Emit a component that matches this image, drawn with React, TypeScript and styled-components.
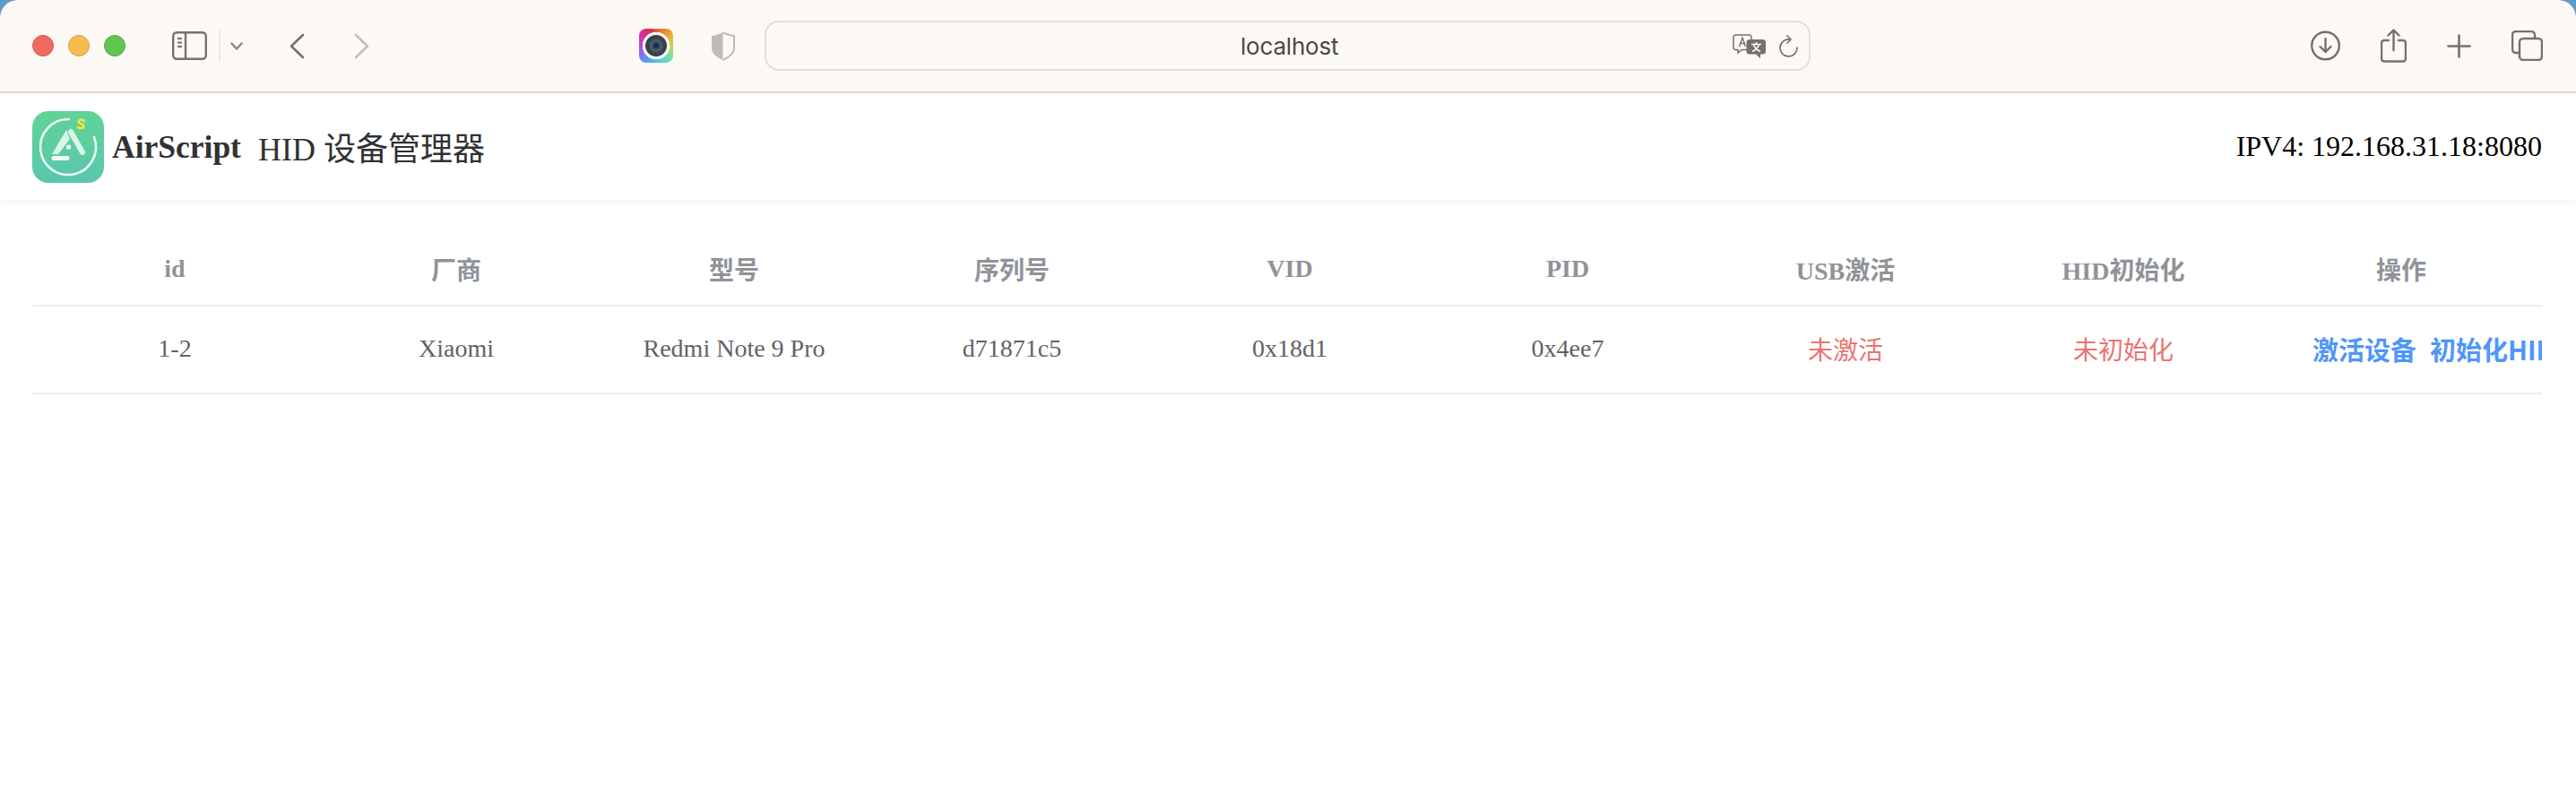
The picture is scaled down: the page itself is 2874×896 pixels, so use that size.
import React from 'react';
import styled, { createGlobalStyle } from 'styled-components';

const GlobalStyle = createGlobalStyle`
  html, body {
    margin: 0;
    padding: 0;
    background: #fff;
  }
  body {
    font-family: "Liberation Serif", "Noto Sans CJK SC", serif;
  }
`;

const Page = styled.div`
  width: 2874px;
  height: 896px;
  overflow: hidden;
  background: #fff;
`;

const CornerBackdrop = styled.div`
  background: #5a9cc8;
`;

const Toolbar = styled.div`
  height: 102px;
  background: #fcf9f5;
  border-bottom: 2px solid #dddcda;
  display: flex;
  align-items: center;
  padding: 0 37px 0 36px;
  color: #74716c;
  border-radius: 20px 20px 0 0;
`;

const Lights = styled.div`
  display: flex;
  gap: 16px;
  margin-right: 52px;
`;

const Light = styled.span<{ $color: string; $edge: string }>`
  width: 24px;
  height: 24px;
  border-radius: 50%;
  box-sizing: border-box;
  background: ${(p) => p.$color};
  border: 1px solid ${(p) => p.$edge};
`;

const Divider = styled.span`
  width: 2px;
  height: 36px;
  background: #ece9e5;
  margin: 0 11px 0 13px;
`;

const NavIcon = styled.svg<{ $left?: number }>`
  display: block;
  flex: none;
  margin-left: ${(p) => p.$left ?? 0}px;
`;

const Camera = styled.span`
  flex: none;
  width: 38px;
  height: 38px;
  margin-left: 301px;
  border-radius: 8px;
  background:
    radial-gradient(circle at 50% 50%, #1e3346 0 3px, #46596b 4px 7px, #3b4149 8px 11.5px, #fff 12.5px 15px, transparent 15.5px),
    conic-gradient(#e0603a, #e8b838 60deg, #b8dc60 100deg, #68dcc0 140deg, #4ea6f5 210deg, #9a5cf0 250deg, #d82fb0 300deg, #d8304f 340deg, #e0603a);
`;

const UrlBar = styled.div`
  width: 1167px;
  height: 56px;
  margin-left: 33px;
  border: 2px solid #e2dfda;
  border-radius: 16px;
  box-sizing: border-box;
  display: flex;
  align-items: center;
  justify-content: flex-end;
  position: relative;
  padding-right: 12px;
  gap: 15px;
  flex: none;
`;

const UrlText = styled.span`
  position: absolute;
  left: 529px;
  font-family: "Inter", "Liberation Sans", sans-serif;
  font-size: 26px;
  color: #4a4845;
  letter-spacing: -0.2px;
`;

const RightIcons = styled.div`
  margin-left: auto;
  display: flex;
  align-items: center;
  gap: 45px;
`;

const Header = styled.header`
  height: 119px;
  display: flex;
  align-items: center;
  justify-content: space-between;
  padding: 0 38px 0 36px;
  background: #fff;
  box-shadow: 0 2px 8px rgba(0, 0, 0, 0.06);
  position: relative;
`;

const Brand = styled.div`
  display: flex;
  align-items: center;
`;

const BrandName = styled.b`
  font-size: 35.5px;
  color: #303133;
  margin-left: 9px;
`;

const Title = styled.span`
  font-size: 36px;
  color: #303133;
  margin-left: 19px;
  padding-bottom: 2px;
`;

const Address = styled.span`
  font-size: 32px;
  color: #000;
`;

const TableWrap = styled.div`
  margin: 0 38px 0 36px;
  overflow: hidden;
`;

const Row = styled.div<{ $height: number; $top?: number }>`
  display: grid;
  grid-template-columns: 318px repeat(8, 310px);
  height: ${(p) => p.$height}px;
  padding-top: ${(p) => p.$top ?? 0}px;
  align-items: center;
  border-bottom: 2px solid #ebeef5;
  box-sizing: border-box;
`;

const HeadCell = styled.div`
  text-align: center;
  font-size: 28px;
  font-weight: bold;
  color: #909399;
`;

const Cell = styled.div<{ $tone?: 'bad' }>`
  text-align: center;
  font-size: 28px;
  padding-bottom: 2px;
  color: ${(p) => (p.$tone === 'bad' ? '#ec7272' : '#606266')};
`;

const ActionCell = styled.div`
  display: flex;
  gap: 15px;
  padding-left: 56px;
  padding-bottom: 2px;
  white-space: nowrap;
`;

const LinkButton = styled.span`
  font-family: "Noto Sans CJK SC", sans-serif;
  font-size: 29px;
  font-weight: 700;
  color: #4f96f8;
`;

const heads = ['id', '厂商', '型号', '序列号', 'VID', 'PID', 'USB激活', 'HID初始化', '操作'];
const cells = ['1-2', 'Xiaomi', 'Redmi Note 9 Pro', 'd71871c5', '0x18d1', '0x4ee7'];

const Logo = () => (
  <svg width="80" height="80" viewBox="0 0 80 80">
    <defs>
      <linearGradient id="logoBg" x1="0" y1="0" x2="0" y2="1">
        <stop offset="0" stopColor="#60d396" />
        <stop offset="1" stopColor="#5bc6ad" />
      </linearGradient>
    </defs>
    <rect width="80" height="80" rx="18" fill="url(#logoBg)" />
    <path d="M41 9 A31 31 0 1 0 69 29" fill="none" stroke="#e9fbf3" strokeWidth="2.600" strokeLinecap="round" />
    <path d="M58 11 q-4-3-6 0 q-1 2 2 3 q4 1 3 4 q-2 2-6 0" fill="none" stroke="#f2e936" strokeWidth="2.600" strokeLinecap="round" />
    <path d="M38 21 L22 48 H29 L42 31 Z" fill="#d8f7ea" />
    <path d="M43 23 L56 46" fill="none" stroke="#d8f7ea" strokeWidth="6" strokeLinecap="round" />
    <path d="M24 52.500 H39" fill="none" stroke="#eefcf6" strokeWidth="5" strokeLinecap="round" />
    <circle cx="40.500" cy="40" r="2.600" fill="#fff" />
  </svg>
);

export default function App() {
  return (
    <Page>
      <GlobalStyle />
      <CornerBackdrop>
        <Toolbar>
          <Lights>
            <Light $color="#ee6a5f" $edge="#d9564c" />
            <Light $color="#f5bd4f" $edge="#d9a23c" />
            <Light $color="#61c554" $edge="#4fae44" />
          </Lights>

          <NavIcon width="39" height="32" viewBox="0 0 39 32" fill="none" stroke="currentColor">
            <rect x="1.200" y="1.200" width="36.600" height="29.600" rx="4" strokeWidth="2.400" />
            <path d="M15 1.500V30.500" strokeWidth="2.400" />
            <path d="M6 8h5M6 12.500h5M6 17h5" strokeWidth="2" />
          </NavIcon>
          <Divider />
          <NavIcon width="14" height="9" viewBox="0 0 14 9" fill="none" stroke="#8b8883" strokeWidth="2.400" strokeLinecap="round" strokeLinejoin="round">
            <path d="M1.500 1.500L7 7.500L12.500 1.500" />
          </NavIcon>
          <NavIcon $left={52} width="17" height="29" viewBox="0 0 17 29" fill="none" stroke="currentColor" strokeWidth="2.600" strokeLinecap="round" strokeLinejoin="round">
            <path d="M15 2L2 14.500L15 27" />
          </NavIcon>
          <NavIcon $left={55} width="17" height="29" viewBox="0 0 17 29" fill="none" stroke="#c2bfba" strokeWidth="2.600" strokeLinecap="round" strokeLinejoin="round">
            <path d="M2 2L15 14.500L2 27" />
          </NavIcon>

          <Camera />
          <NavIcon $left={42} width="27" height="33" viewBox="0 0 27 33">
            <path d="M13.500 1 C10 3 5 4.500 1 5 V19 C1 25 7 29 13.500 32 Z" fill="#bfbbb5" />
            <path d="M13.500 1.500 C17 3 22 4.500 26 5 V19 C26 25 20 29 13.500 32" fill="none" stroke="#bfbbb5" strokeWidth="2" strokeLinejoin="round" />
          </NavIcon>

          <UrlBar>
            <UrlText>localhost</UrlText>
            <NavIcon width="37" height="27" viewBox="0 0 37 27">
              <path d="M3.500 1H18.500a2.500 2.500 0 0 1 2.500 2.500V15a2.500 2.500 0 0 1-2.500 2.500H10L6 21V17.500H3.500A2.500 2.500 0 0 1 1 15V3.500A2.500 2.500 0 0 1 3.500 1Z" fill="#fcf9f5" stroke="#74716c" strokeWidth="1.500" />
              <path d="M7.500 14L11 4L14.500 14M8.800 10.500H13.200" fill="none" stroke="#74716c" strokeWidth="1.400" />
              <path d="M19 6H33.500A3.500 3.500 0 0 1 37 9.500V19A3.500 3.500 0 0 1 33.500 22.500H31V27L26 22.500H19A3.500 3.500 0 0 1 15.500 19V9.500A3.500 3.500 0 0 1 19 6Z" fill="#74716c" />
              <path d="M21 11.500H32M26.500 9V11.500M29.500 11.500Q28 17 22 19.500M23.500 11.500Q25 17 31 19.500" fill="none" stroke="#fcf9f5" strokeWidth="1.600" />
            </NavIcon>
            <NavIcon width="21" height="25" viewBox="0 0 21 25" fill="none" stroke="#74716c" strokeWidth="1.700" strokeLinecap="round" strokeLinejoin="round">
              <path d="M12 5A9.500 9.500 0 1 0 20 14" />
              <path d="M9 1L13 5L9 9" />
            </NavIcon>
          </UrlBar>

          <RightIcons>
            <NavIcon width="33" height="34" viewBox="0 0 33 34" fill="none" stroke="currentColor" strokeWidth="2.400" strokeLinecap="round" strokeLinejoin="round">
              <circle cx="16.500" cy="17" r="15.300" />
              <path d="M16.500 9V24M10.500 18L16.500 24L22.500 18" />
            </NavIcon>
            <NavIcon width="29" height="38" viewBox="0 0 29 38" fill="none" stroke="currentColor" strokeWidth="2.400" strokeLinecap="round" strokeLinejoin="round">
              <path d="M9 13H4a3 3 0 0 0-3 3V33.500a3 3 0 0 0 3 3H25a3 3 0 0 0 3-3V16a3 3 0 0 0-3-3H20" />
              <path d="M14.500 24V2M8.500 7.500L14.500 1.500L20.500 7.500" />
            </NavIcon>
            <NavIcon width="27" height="27" viewBox="0 0 27 27" fill="none" stroke="currentColor" strokeWidth="2.600" strokeLinecap="round">
              <path d="M13.500 1.500V25.500M1.500 13.500H25.500" />
            </NavIcon>
            <NavIcon width="35" height="34" viewBox="0 0 35 34" fill="none" stroke="currentColor" strokeWidth="2.400" strokeLinejoin="round">
              <rect x="9" y="9" width="25" height="24" rx="4" />
              <path d="M9 25H5a4 4 0 0 1-4-4V5a4 4 0 0 1 4-4H22a4 4 0 0 1 4 4V9" />
            </NavIcon>
          </RightIcons>
        </Toolbar>
      </CornerBackdrop>

      <Header>
        <Brand>
          <Logo />
          <BrandName>AirScript</BrandName>
          <Title>HID 设备管理器</Title>
        </Brand>
        <Address>IPV4: 192.168.31.18:8080</Address>
      </Header>

      <TableWrap>
        <Row $height={119} $top={36}>
          {heads.map((h) => (
            <HeadCell key={h}>{h}</HeadCell>
          ))}
        </Row>
        <Row $height={98}>
          {cells.map((c) => (
            <Cell key={c}>{c}</Cell>
          ))}
          <Cell $tone="bad">未激活</Cell>
          <Cell $tone="bad">未初始化</Cell>
          <ActionCell>
            <LinkButton>激活设备</LinkButton>
            <LinkButton>初始化HID</LinkButton>
          </ActionCell>
        </Row>
      </TableWrap>
    </Page>
  );
}
